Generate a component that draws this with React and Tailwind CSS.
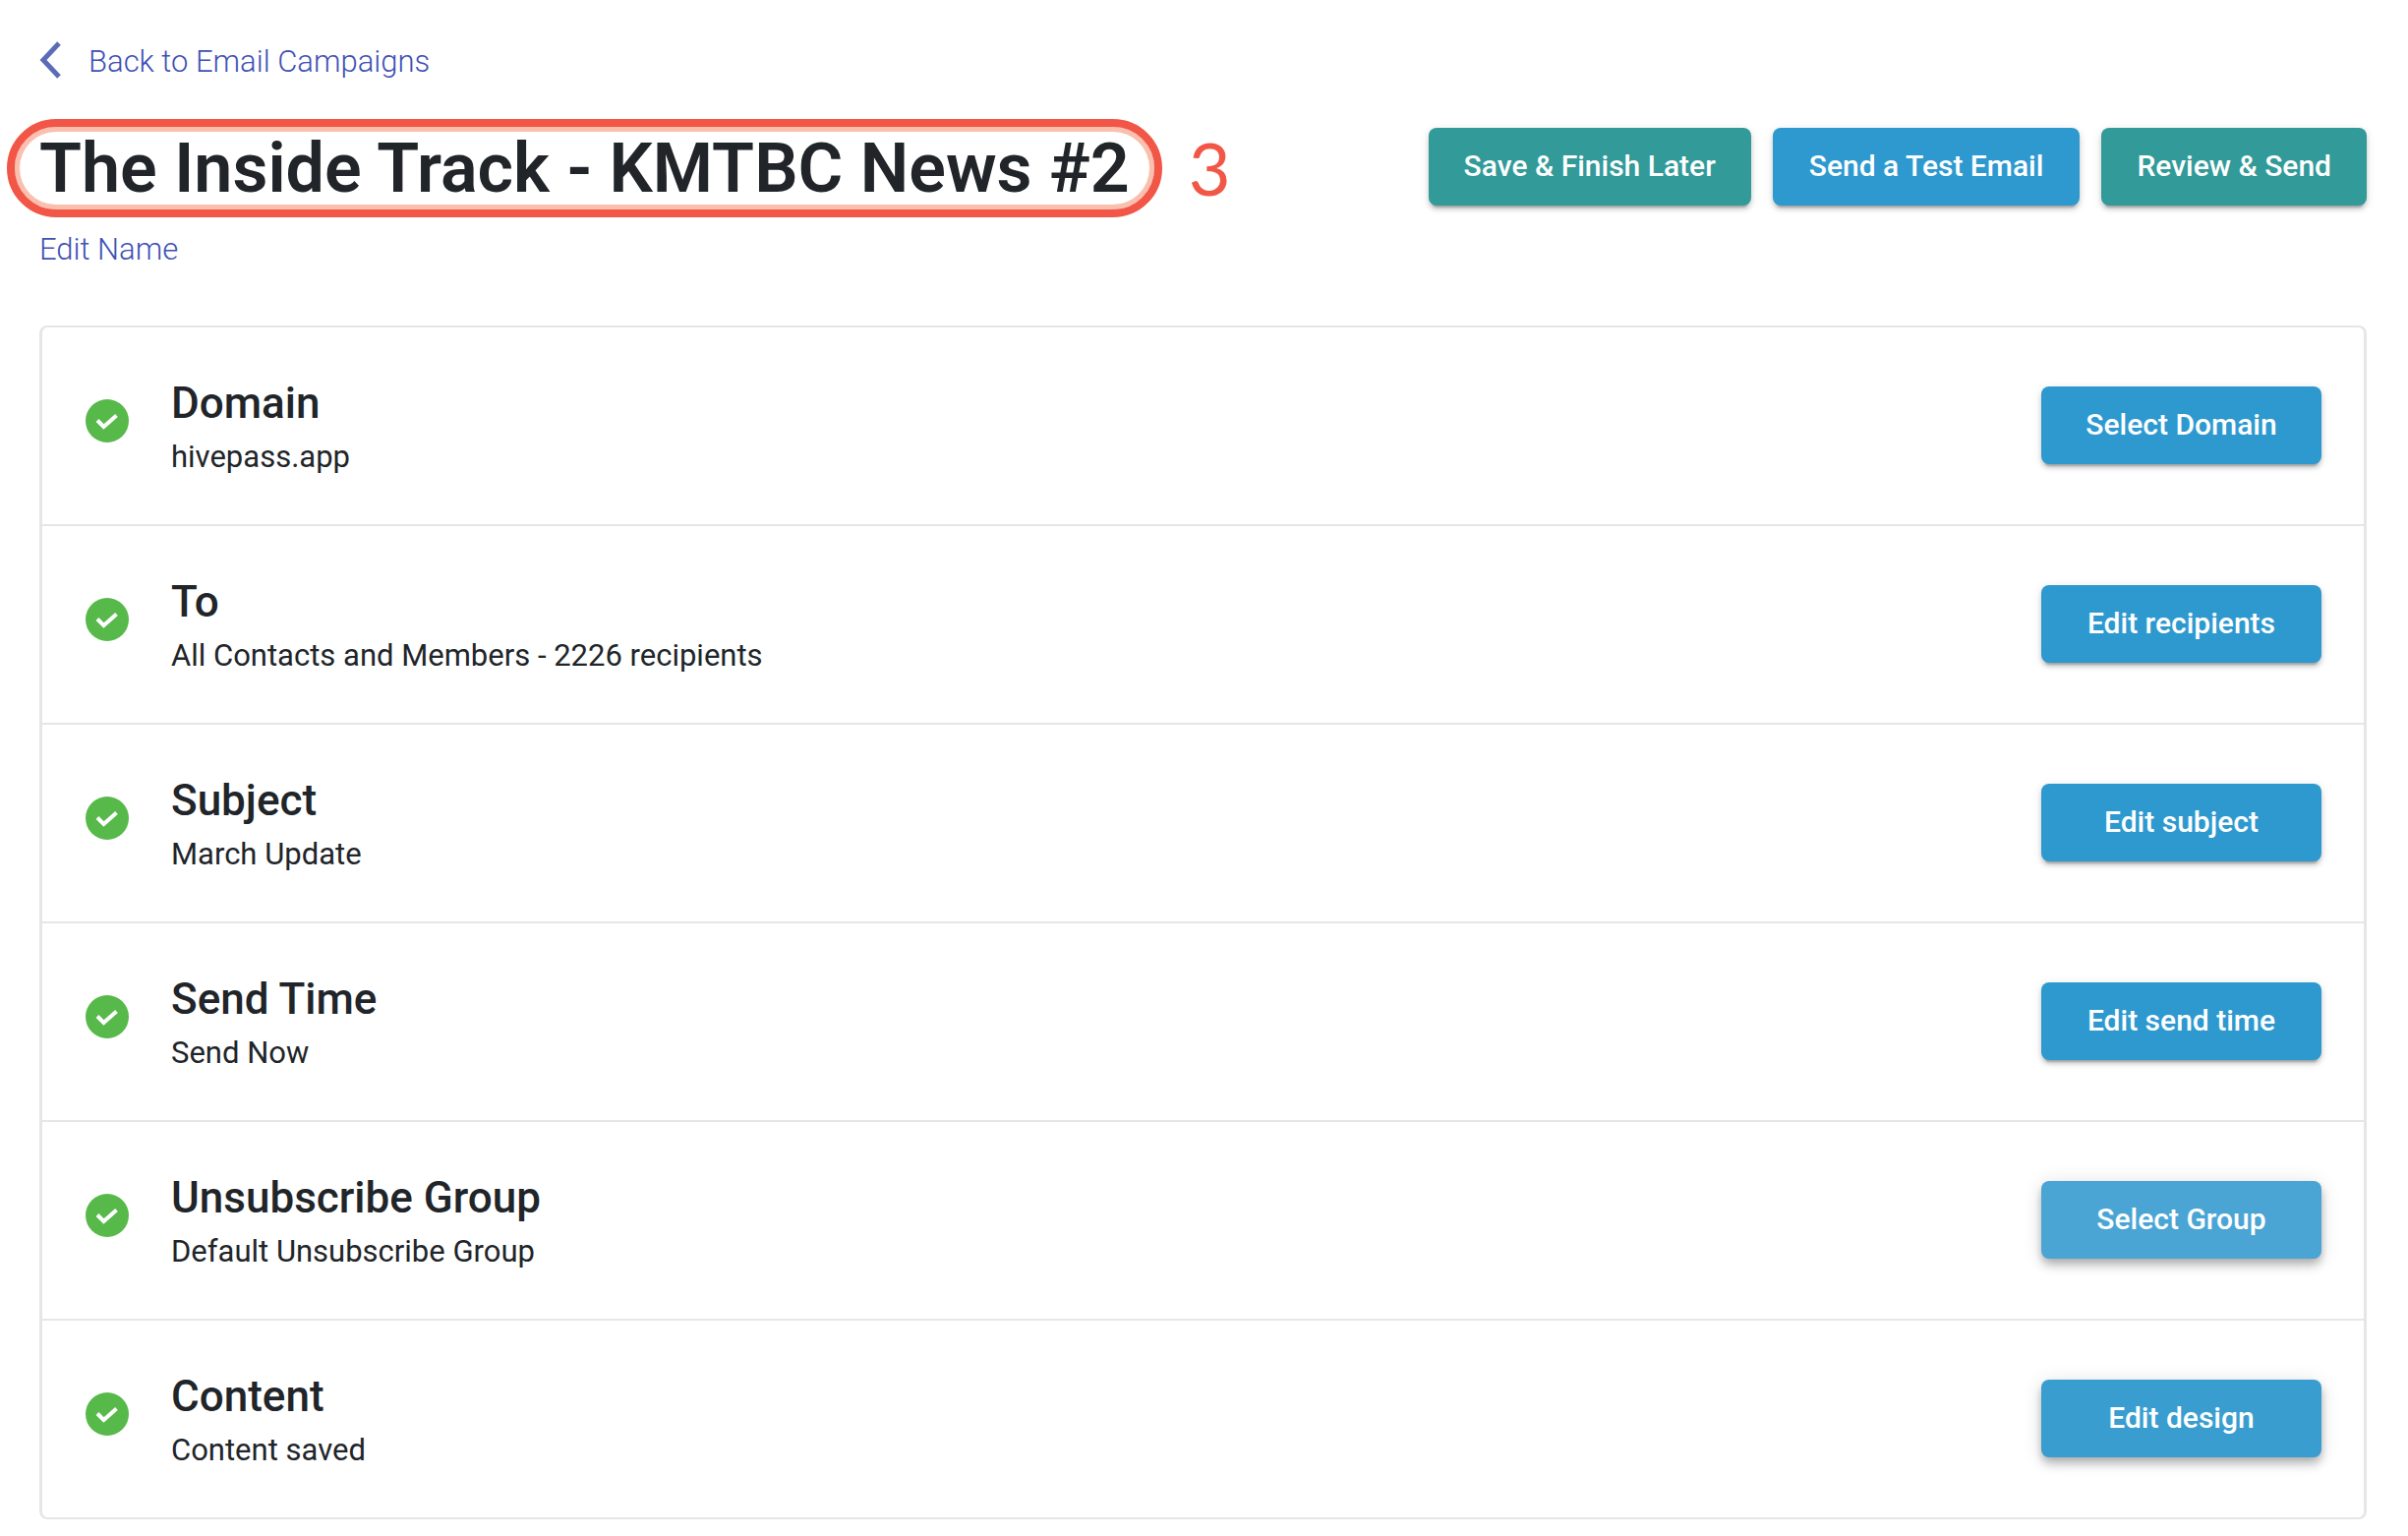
import clsx from 'clsx'

const steps = [
  { title: 'Domain', detail: 'hivepass.app', action: 'Select Domain' },
  { title: 'To', detail: 'All Contacts and Members - 2226 recipients', action: 'Edit recipients' },
  { title: 'Subject', detail: 'March Update', action: 'Edit subject' },
  { title: 'Send Time', detail: 'Send Now', action: 'Edit send time' },
  { title: 'Unsubscribe Group', detail: 'Default Unsubscribe Group', action: 'Select Group', tone: 'focused' },
  { title: 'Content', detail: 'Content saved', action: 'Edit design', tone: 'hovered' },
]

const flat = 'shadow-[0_6px_2px_-4px_rgba(0,0,0,0.2),0_4px_4px_0_rgba(0,0,0,0.14),0_2px_10px_0_rgba(0,0,0,0.12)]'
const raised = 'shadow-[0_4px_8px_-2px_rgba(0,0,0,0.2),0_8px_10px_0_rgba(0,0,0,0.14),0_2px_20px_0_rgba(0,0,0,0.12)]'

const tones = {
  blue: clsx('bg-[#2e99cf]', flat),
  teal: clsx('bg-[#329a99]', flat),
  focused: clsx('bg-[#4aa5d5]', raised),
  hovered: clsx('bg-[#399ecf]', raised),
}

function Button({ tone = 'blue', className, children }) {
  return (
    <button
      type="button"
      className={clsx(
        'shrink-0 rounded-lg pt-[21px] pb-[22px] text-[30px] leading-9 font-medium whitespace-nowrap text-white',
        tones[tone],
        className
      )}
    >
      {children}
    </button>
  )
}

function CheckBadge() {
  return (
    <svg className="mb-[10px] size-11 shrink-0" viewBox="0 0 44 44" fill="none" aria-hidden="true">
      <circle cx="22" cy="22" r="22" fill="#58b94b" />
      <path d="M12 21.5l6.5 6.5L31.5 16.5" stroke="#fff" strokeWidth="4" />
    </svg>
  )
}

function Step({ title, detail, action, tone }) {
  return (
    <li className="flex items-center pt-[49px] pr-[43px] pb-[50px] pl-[44px]">
      <CheckBadge />
      <div className="ml-[43px] min-w-0 flex-1">
        <h2 className="text-[44px] leading-[56px] font-medium">{title}</h2>
        <p className="mt-[9px] text-[31px] leading-9">{detail}</p>
      </div>
      <Button tone={tone} className="-my-4 w-[285px]">{action}</Button>
    </li>
  )
}

export default function App() {
  return (
    <main className="min-h-screen bg-white px-10 pt-[45px] pr-[42px] pb-4 font-['Roboto',sans-serif] text-[#212529]">
      <a href="#campaigns" className="flex h-9 w-fit items-center gap-7 text-[31px] leading-9 font-light text-[#3f51b5]">
        <svg className="-mt-1 h-[38px] w-[22px]" viewBox="0 0 22 38" fill="none" aria-hidden="true">
          <path d="M20 2L4 19l16 17" stroke="#5c6bb8" strokeWidth="5" />
        </svg>
        Back to Email Campaigns
      </a>

      <header className="mt-[49px] flex items-start justify-between">
        <div className="flex items-center">
          <div className="relative">
            <h1 className="text-[70px] leading-[82px] font-semibold whitespace-nowrap">The Inside Track - KMTBC News #2</h1>
            <div className="absolute -inset-x-[33px] -inset-y-[9px] rounded-full border-8 border-[#f15646] inset-ring-[5px] inset-ring-[#fbbfae]" />
          </div>
          <span className="ml-[60px] font-['Lato',sans-serif] text-[74px] leading-[82px] text-[#f15646]">3</span>
        </div>
        <div className="flex gap-[22px]">
          <Button tone="teal" className="px-9">Save &amp; Finish Later</Button>
          <Button className="px-[37px]">Send a Test Email</Button>
          <Button tone="teal" className="px-9">Review &amp; Send</Button>
        </div>
      </header>

      <a href="#edit-name" className="mt-6 block w-fit text-[31px] leading-9 font-light text-[#3f51b5]">
        Edit Name
      </a>

      <ul className="mt-[59px] divide-y-2 divide-[#e6e6e6] rounded-lg border-x-[3px] border-y-2 border-[#e6e6e6]">
        {steps.map((step) => (
          <Step key={step.title} {...step} />
        ))}
      </ul>
    </main>
  )
}
